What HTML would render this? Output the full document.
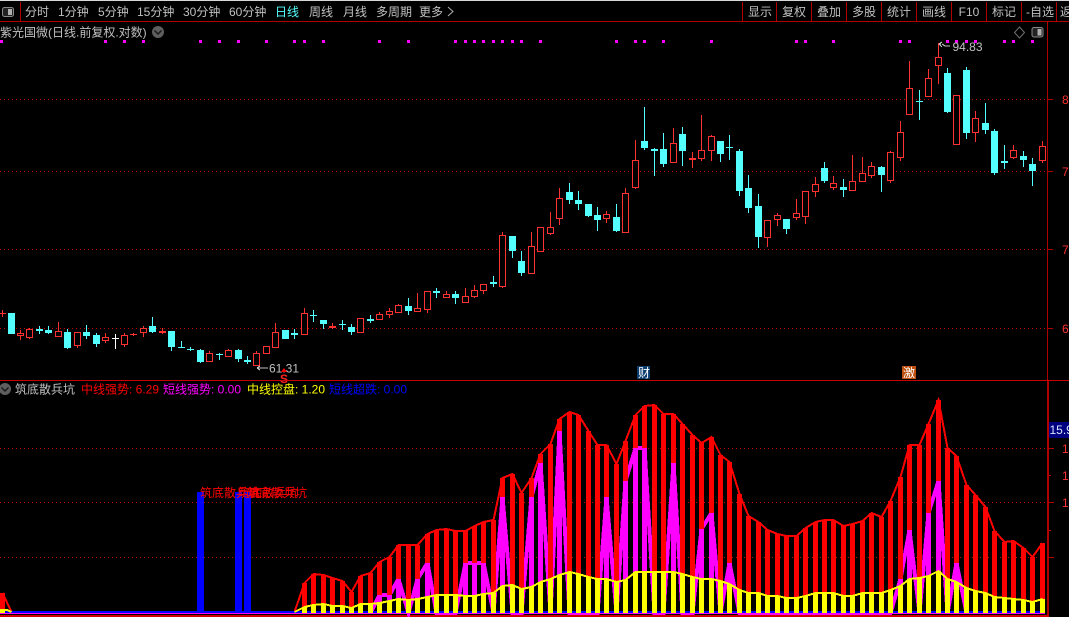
<!DOCTYPE html>
<html lang="zh"><head><meta charset="utf-8"><title>紫光国微</title>
<style>
html,body{margin:0;padding:0;background:#000;width:1069px;height:617px;overflow:hidden}
svg{display:block;position:absolute;left:0;top:0}
text{font-family:"Liberation Sans","WenQuanYi Zen Hei","Noto Sans CJK SC",sans-serif;font-size:12px;fill:#c0c0c0}
.c{shape-rendering:crispEdges}
</style></head><body>
<svg width="1069" height="617" viewBox="0 0 1069 617" xmlns="http://www.w3.org/2000/svg">
<rect width="1069" height="617" fill="#000"/>
<rect width="1069" height="1" fill="#d8d8d8"/>
<g class="c">
<rect x="0" y="21" width="1069" height="1" fill="#b00000"/>
<rect x="20" y="2" width="1" height="19" fill="#b00000"/>
<path d="M742.5 2V21M776.5 2V21M811.5 2V21M846.5 2V21M881.5 2V21M916.5 2V21M951.5 2V21M986.5 2V21M1021.5 2V21M1056.5 2V21" stroke="#b00000" fill="none"/>
<rect x="1047" y="22" width="1" height="358" fill="#b00000"/>
<rect x="1047" y="381" width="2" height="236" fill="#b00000"/>
<rect x="0" y="380" width="1069" height="1" fill="#c80000"/>
<rect x="0" y="615" width="1049" height="2" fill="#d00000"/>
<path d="M0 99.5H1047M0 171.5H1047M0 249.5H1047M0 328.5H1047M0 448.5H1047M0 502.5H1047M0 557.5H1047" stroke="#c00000" stroke-dasharray="1 3" fill="none"/>
<path d="M1048 99.5h5M1048 171.5h5M1048 249.5h5M1048 328.5h5M1049 448.5h5M1049 475.5h2M1049 502.5h5M1049 530.5h2M1049 557.5h5" stroke="#b00000" fill="none"/>
</g>
<rect x="2.5" y="7.5" width="11" height="9" rx="2" fill="#222" stroke="#8a8a8a"/><rect x="8" y="9" width="4" height="6" fill="#b0b0b0"/>
<text x="25" y="16">分时</text><text x="58" y="16">1分钟</text><text x="98" y="16">5分钟</text><text x="137" y="16">15分钟</text><text x="183" y="16">30分钟</text><text x="229" y="16">60分钟</text>
<text x="275" y="16" style="fill:#54ffff">日线</text><text x="309" y="16">周线</text><text x="343" y="16">月线</text><text x="376" y="16">多周期</text><text x="419" y="16">更多</text>
<path d="M448 7l5 4.5-5 4.5" stroke="#b0b0b0" fill="none"/>
<g text-anchor="middle"><text x="760" y="16">显示</text><text x="794" y="16">复权</text><text x="829" y="16">叠加</text><text x="864" y="16">多股</text><text x="899" y="16">统计</text><text x="934" y="16">画线</text><text x="969" y="16">F10</text><text x="1004" y="16">标记</text><text x="1040" y="16">-自选</text></g>
<text x="1060" y="16">返回</text>
<text x="0" y="36.500">紫光国微(日线.前复权.对数)</text>
<circle cx="158" cy="32" r="6" fill="#5e5e5e"/><path d="M154.500 30.500l3.500 3.500 3.500-3.500" stroke="#1a1a1a" stroke-width="1.500" fill="none"/>
<path d="M1019.500 27l5 5.500-5 5.500-5-5.500z" stroke="#707070" fill="none"/>
<rect x="1032" y="27.500" width="11" height="9.500" rx="2" fill="#222" stroke="#8a8a8a"/><rect x="1037.500" y="29" width="4" height="6.500" fill="#b0b0b0"/>
<path class="c" fill="#ff00ff" d="M0 40h3v3H0zM104 40h3v3h-3zM123 40h3v3h-3zM142 40h3v3h-3zM199 40h3v3h-3zM218 40h3v3h-3zM237 40h3v3h-3zM265 40h3v3h-3zM293 40h3v3h-3zM303 40h3v3h-3zM322 40h3v3h-3zM378 40h3v3h-3zM407 40h3v3h-3zM454 40h3v3h-3zM464 40h3v3h-3zM473 40h3v3h-3zM482 40h3v3h-3zM492 40h3v3h-3zM501 40h3v3h-3zM511 40h3v3h-3zM520 40h3v3h-3zM539 40h3v3h-3zM615 40h3v3h-3zM634 40h3v3h-3zM643 40h3v3h-3zM662 40h3v3h-3zM710 40h3v3h-3zM795 40h3v3h-3zM804 40h3v3h-3zM832 40h3v3h-3zM899 40h3v3h-3zM908 40h3v3h-3zM946 40h3v3h-3zM955 40h3v3h-3zM965 40h3v3h-3zM974 40h3v3h-3zM1003 40h3v3h-3zM1012 40h3v3h-3zM1031 40h3v3h-3z"/>
<!-- candles -->
<g class="c">
<path stroke="#ff3232" fill="none" d="M2.500 310V317M20.500 330V340M29.500 328V339M58.500 322V337M77.500 332V348M105.500 333V343M124.500 333V347M133.500 333V336M143.500 326V337M162.500 328V334M209.500 351V362M228.500 349V357M256.500 351V366M266.500 346V354M275.500 323V348M304.500 308V335M332.500 323V329M360.500 318V333M379.500 312V320M389.500 308V318M398.500 304V313M417.500 293V312M427.500 291V313M446.500 291V298M465.500 288V303M474.500 285V298M483.500 284V294M502.500 232V288M531.500 232V274M540.500 227V252M550.500 212V235M559.500 188V225M606.500 211V223M625.500 188V233M635.500 140V189M673.500 128V163M692.500 152V168M701.500 115V161M711.500 135V161M767.500 220V247M777.500 213V226M796.500 199V220M805.500 191V224M815.500 177V197M833.500 176V190M852.500 155V191M862.500 157V182M871.500 162V178M890.500 151V183M900.500 121V161M909.500 61V115M928.500 69V97M938.500 43V84M956.500 95V145M975.500 111V142M1013.500 145V159M1042.500 141V163"/>
<path fill="#ff3232" d="M0 313h6v1H0zM130 334h7v1h-7zM159 331h7v2h-7zM329 326h7v2h-7zM689 158h7v2h-7z"/>
<path fill="#000" stroke="#ff3232" d="M17.500 333.500h6V335.500h-6zM26.500 329.500h6V337.500h-6zM55.500 331.500h6V336.500h-6zM74.500 332.500h6V345.500h-6zM102.500 337.500h6V340.500h-6zM121.500 335.500h6V344.500h-6zM140.500 328.500h6V332.500h-6zM206.500 353.500h6V361.500h-6zM225.500 350.500h6V356.500h-6zM253.500 353.500h6V365.500h-6zM263.500 346.500h6V353.500h-6zM272.500 332.500h6V347.500h-6zM301.500 313.500h6V334.500h-6zM357.500 318.500h6V332.500h-6zM376.500 314.500h6V319.500h-6zM386.500 311.500h6V314.500h-6zM395.500 305.500h6V312.500h-6zM414.500 308.500h6V311.500h-6zM424.500 291.500h6V309.500h-6zM443.500 294.500h6V297.500h-6zM462.500 296.500h6V302.500h-6zM471.500 290.500h6V296.500h-6zM480.500 284.500h6V290.500h-6zM499.500 235.500h6V286.500h-6zM528.500 246.500h6V273.500h-6zM537.500 227.500h6V251.500h-6zM547.500 227.500h6V233.500h-6zM556.500 198.500h6V218.500h-6zM603.500 214.500h6V218.500h-6zM622.500 193.500h6V232.500h-6zM632.500 160.500h6V187.500h-6zM670.500 143.500h6V162.500h-6zM698.500 150.500h6V158.500h-6zM708.500 136.500h6V150.500h-6zM764.500 220.500h6V237.500h-6zM774.500 215.500h6V219.500h-6zM793.500 213.500h6V217.500h-6zM802.500 191.500h6V216.500h-6zM812.500 184.500h6V191.500h-6zM830.500 183.500h6V187.500h-6zM849.500 181.500h6V190.500h-6zM859.500 173.500h6V181.500h-6zM868.500 166.500h6V175.500h-6zM887.500 152.500h6V180.500h-6zM897.500 132.500h6V157.500h-6zM906.500 88.500h6V114.500h-6zM925.500 78.500h6V96.500h-6zM935.500 57.500h6V65.500h-6zM953.500 95.500h6V144.500h-6zM972.500 118.500h6V132.500h-6zM1010.500 150.500h6V157.500h-6zM1039.500 146.500h6V160.500h-6z"/>
<path stroke="#54ffff" fill="none" d="M39.500 326V334M48.500 326V334M67.500 329V349M86.500 325V339M96.500 333V347M152.500 317V333M171.500 331V351M181.500 341V348M190.500 347V351M200.500 349V363M219.500 353V360M238.500 349V362M247.500 356V364M294.500 329V339M313.500 310V322M323.500 320V329M342.500 320V330M351.500 324V335M370.500 315V323M408.500 298V315M436.500 288V298M455.500 291V304M493.500 276V287M512.500 236V258M521.500 251V276M569.500 183V204M578.500 191V210M588.500 204V217M597.500 207V231M616.500 204V232M644.500 107V150M654.500 148V176M663.500 133V167M682.500 127V166M720.500 141V162M729.500 135V160M739.500 149V196M748.500 175V213M758.500 194V248M786.500 219V234M824.500 162V183M843.500 179V197M881.500 166V192M919.500 90V120M947.500 68V113M966.500 67V139M985.500 103V134M994.500 129V175M1004.500 145V169M1023.500 151V167M1032.500 158V186"/>
<path fill="#54ffff" d="M8 313h7V334h-7zM36 329h7V331h-7zM45 330h7V333h-7zM64 332h7V348h-7zM83 332h7V336h-7zM93 335h7V344h-7zM149 326h7V332h-7zM168 331h7V347h-7zM178 347h7V348h-7zM187 349h7V350h-7zM197 350h7V362h-7zM216 354h7V355h-7zM235 350h7V359h-7zM244 360h7V362h-7zM282 330h7V339h-7zM291 333h7V335h-7zM310 315h7V316h-7zM320 320h7V324h-7zM339 324h7V325h-7zM348 327h7V332h-7zM367 319h7V321h-7zM405 306h7V311h-7zM433 291h7V293h-7zM452 294h7V298h-7zM490 282h7V284h-7zM509 236h7V251h-7zM518 261h7V273h-7zM566 192h7V200h-7zM575 200h7V204h-7zM585 204h7V216h-7zM594 215h7V220h-7zM613 217h7V231h-7zM641 141h7V148h-7zM651 149h7V151h-7zM660 149h7V164h-7zM679 134h7V151h-7zM717 141h7V154h-7zM726 147h7V148h-7zM736 151h7V191h-7zM745 188h7V208h-7zM755 206h7V237h-7zM783 219h7V229h-7zM821 168h7V181h-7zM840 187h7V190h-7zM878 167h7V175h-7zM916 101h7V102h-7zM944 73h7V112h-7zM963 70h7V133h-7zM982 123h7V130h-7zM991 131h7V173h-7zM1001 161h7V163h-7zM1020 156h7V160h-7zM1029 164h7V171h-7z"/>
<path stroke="#fff" fill="none" d="M115.500 334V349M112 338.500h7"/>
</g>
<!-- chart annotations -->
<g stroke="#c0c0c0" fill="none" class="c"><path d="M257 368h11M257 368l3-2M257 368l3 2M939 44h2M939 44l3-2M939 44l3 3M942 44l3 2h5"/></g>
<text x="269" y="372.500">61.31</text>
<text x="952.500" y="51">94.83</text>
<path d="M284 368l3 4h-6z" fill="#ff0000"/>
<text x="280" y="383" style="fill:#ff2020;font-weight:bold;font-size:12px">S</text>
<rect x="637" y="366" width="13" height="13" fill="#0b3c6e"/><text x="638" y="377" style="fill:#fff">财</text>
<rect x="902" y="366" width="14" height="13" fill="#c05010"/><text x="903" y="377" style="fill:#fff">激</text>
<rect x="0" y="380" width="1069" height="1" fill="#c80000" class="c"/>
<g style="font-size:12px">
<text x="1062" y="104" style="fill:#ff3232">8</text><text x="1062" y="176" style="fill:#ff3232">7</text><text x="1062" y="254" style="fill:#ff3232">7</text><text x="1062" y="333" style="fill:#ff3232">6</text>
<text x="1062" y="453" style="fill:#ff3232">1</text><text x="1062" y="480" style="fill:#ff3232">1</text><text x="1062" y="507" style="fill:#ff3232">1</text>
</g>
<rect x="1049" y="422" width="20" height="16" fill="#000080" class="c"/><text x="1049.500" y="434" style="fill:#d8e8ff">15.9</text>
<!-- lower panel title -->
<circle cx="5" cy="389" r="6" fill="#5e5e5e"/><path d="M1.500 387.500l3.500 3.500 3.500-3.500" stroke="#1a1a1a" stroke-width="1.500" fill="none"/>
<text x="15" y="393.500">筑底散兵坑</text>
<text x="81" y="393.500" style="fill:#ff0000">中线强势: 6.29</text>
<text x="163" y="393.500" style="fill:#ff00ff">短线强势: 0.00</text>
<text x="247" y="393.500" style="fill:#ffff00">中线控盘: 1.20</text>
<text x="329" y="393.500" style="fill:#0000ff">短线超跌: 0.00</text>
<!-- lower panel -->
<g class="c" fill="none">
<path stroke="#0000ff" stroke-width="7" d="M200.500 492V612M238.500 492V612M247.500 492V612"/>
<polyline stroke="#ff00ff" stroke-width="4" points="370.500,613 379.500,595 389.500,595 398.500,579 408.500,613 417.500,579 427.500,563 436.500,613 455.500,613 465.500,563 474.500,563 483.500,563 493.500,613 502.500,497 512.500,613 521.500,613 531.500,497 540.500,463 550.500,613 559.500,431 569.500,613 597.500,613 606.500,497 616.500,613 625.500,481 635.500,448 644.500,448 654.500,613 663.500,613 673.500,463 682.500,613 692.500,613 701.500,529 711.500,513 720.500,613 729.500,563 739.500,613 890.500,613 900.500,579 909.500,530 919.500,613 928.500,513 938.500,481 947.500,613 956.500,563 966.500,613"/>
<polyline stroke="#ff0000" stroke-width="2" points="2.500,593 11.500,612 294.500,612 304.500,583 313.500,574 323.500,575 332.500,578 342.500,581 351.500,592 360.500,576 370.500,573 379.500,562 389.500,557 398.500,545 408.500,545 417.500,545 427.500,534 436.500,530 446.500,529 455.500,531 465.500,531 474.500,526 483.500,522 493.500,520 502.500,478 512.500,474 521.500,493 531.500,478 540.500,454 550.500,444 559.500,419 569.500,412 578.500,415 588.500,431 597.500,445 606.500,445 616.500,464 625.500,441 635.500,415 644.500,406 654.500,405 663.500,414 673.500,414 682.500,424 692.500,435 701.500,443 711.500,437 720.500,455 729.500,462 739.500,494 748.500,516 758.500,522 767.500,530 777.500,534 786.500,536 796.500,536 805.500,528 815.500,522 824.500,520 833.500,520 843.500,526 852.500,524 862.500,521 871.500,513 881.500,517 890.500,501 900.500,477 909.500,445 919.500,445 928.500,424 938.500,400 947.500,448 956.500,456 966.500,485 975.500,495 985.500,507 994.500,531 1004.500,542 1013.500,541 1023.500,548 1032.500,557 1042.500,543"/>
<path stroke="#ff0000" stroke-width="5" d="M2.500 593V612M304.500 583V612M313.500 574V612M323.500 575V612M332.500 578V612M342.500 581V612M351.500 592V612M360.500 576V612M370.500 573V612M379.500 562V612M389.500 557V612M398.500 545V612M408.500 545V612M417.500 545V612M427.500 534V612M436.500 530V612M446.500 529V612M455.500 531V612M465.500 531V612M474.500 526V612M483.500 522V612M493.500 520V612M502.500 478V612M512.500 474V612M521.500 493V612M531.500 478V612M540.500 454V612M550.500 444V612M559.500 419V612M569.500 412V612M578.500 415V612M588.500 431V612M597.500 445V612M606.500 445V612M616.500 464V612M625.500 441V612M635.500 415V612M644.500 406V612M654.500 405V612M663.500 414V612M673.500 414V612M682.500 424V612M692.500 435V612M701.500 443V612M711.500 437V612M720.500 455V612M729.500 462V612M739.500 494V612M748.500 516V612M758.500 522V612M767.500 530V612M777.500 534V612M786.500 536V612M796.500 536V612M805.500 528V612M815.500 522V612M824.500 520V612M833.500 520V612M843.500 526V612M852.500 524V612M862.500 521V612M871.500 513V612M881.500 517V612M890.500 501V612M900.500 477V612M909.500 445V612M919.500 445V612M928.500 424V612M938.500 400V612M947.500 448V612M956.500 456V612M966.500 485V612M975.500 495V612M985.500 507V612M994.500 531V612M1004.500 542V612M1013.500 541V612M1023.500 548V612M1032.500 557V612M1042.500 543V612"/>
<path stroke="#ff00ff" stroke-width="5" d="M379.500 595V612M389.500 595V612M398.500 579V612M417.500 579V612M427.500 563V612M465.500 563V612M474.500 563V612M483.500 563V612M502.500 497V612M531.500 497V612M540.500 463V612M559.500 431V612M606.500 497V612M625.500 481V612M635.500 448V612M644.500 448V612M673.500 463V612M701.500 529V612M711.500 513V612M729.500 563V612M900.500 579V612M909.500 530V612M928.500 513V612M938.500 481V612M956.500 563V612"/>
<rect x="0" y="611" width="1045" height="2" fill="#0000ff"/>
<rect x="0" y="613" width="1045" height="1" fill="#ff00ff"/>
<path stroke="#ffff00" stroke-width="5" d="M2.500 610V613M304.500 607V613M313.500 605V613M323.500 604V613M332.500 606V613M342.500 606V613M351.500 608V613M360.500 604V613M370.500 604V613M379.500 603V613M389.500 601V613M398.500 599V613M408.500 600V613M417.500 599V613M427.500 597V613M436.500 595V613M446.500 595V613M455.500 595V613M465.500 596V613M474.500 596V613M483.500 594V613M493.500 593V613M502.500 586V613M512.500 585V613M521.500 589V613M531.500 587V613M540.500 582V613M550.500 579V613M559.500 575V613M569.500 572V613M578.500 574V613M588.500 577V613M597.500 579V613M606.500 579V613M616.500 582V613M625.500 580V613M635.500 572V613M644.500 572V613M654.500 572V613M663.500 572V613M673.500 572V613M682.500 574V613M692.500 577V613M701.500 579V613M711.500 579V613M720.500 581V613M729.500 584V613M739.500 590V613M748.500 593V613M758.500 593V613M767.500 596V613M777.500 596V613M786.500 598V613M796.500 598V613M805.500 596V613M815.500 593V613M824.500 593V613M833.500 593V613M843.500 596V613M852.500 596V613M862.500 593V613M871.500 593V613M881.500 593V613M890.500 590V613M900.500 586V613M909.500 579V613M919.500 578V613M928.500 576V613M938.500 571V613M947.500 579V613M956.500 582V613M966.500 588V613M975.500 591V613M985.500 593V613M994.500 597V613M1004.500 598V613M1013.500 599V613M1023.500 600V613M1032.500 602V613M1042.500 599V613"/>
<polyline stroke="#ffff00" stroke-width="2" points="0,610 7,610 11.500,612"/>
<polyline stroke="#ffff00" stroke-width="2" points="294.500,612 304.500,607 313.500,605 323.500,604 332.500,606 342.500,606 351.500,608 360.500,604 370.500,604 379.500,603 389.500,601 398.500,599 408.500,600 417.500,599 427.500,597 436.500,595 446.500,595 455.500,595 465.500,596 474.500,596 483.500,594 493.500,593 502.500,586 512.500,585 521.500,589 531.500,587 540.500,582 550.500,579 559.500,575 569.500,572 578.500,574 588.500,577 597.500,579 606.500,579 616.500,582 625.500,580 635.500,572 644.500,572 654.500,572 663.500,572 673.500,572 682.500,574 692.500,577 701.500,579 711.500,579 720.500,581 729.500,584 739.500,590 748.500,593 758.500,593 767.500,596 777.500,596 786.500,598 796.500,598 805.500,596 815.500,593 824.500,593 833.500,593 843.500,596 852.500,596 862.500,593 871.500,593 881.500,593 890.500,590 900.500,586 909.500,579 919.500,578 928.500,576 938.500,571 947.500,579 956.500,582 966.500,588 975.500,591 985.500,593 994.500,597 1004.500,598 1013.500,599 1023.500,600 1032.500,602 1042.500,599"/>
</g>
<g style="font-size:12px">
<text x="200" y="497" style="fill:#ff0000">筑底散兵坑</text>
<text x="238" y="497" style="fill:#ff0000">筑底散兵坑</text>
<text x="247" y="497" style="fill:#ff0000">筑底散兵坑</text>
</g>
</svg>
</body></html>
